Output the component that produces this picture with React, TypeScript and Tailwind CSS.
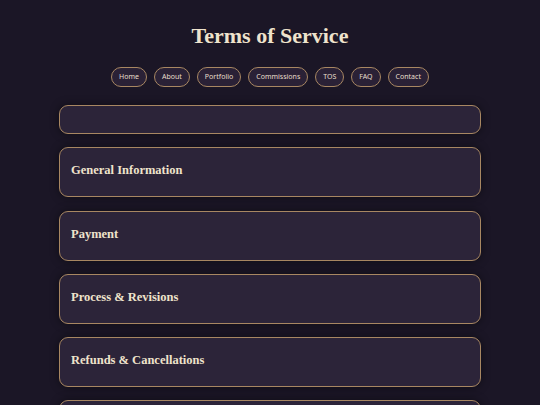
import React from "react";

const links = ["Home", "About", "Portfolio", "Commissions", "TOS", "FAQ", "Contact"];

// the first and last boxes are intro/continuation panels with no heading
const sections = [
  "",
  "General Information",
  "Payment",
  "Process & Revisions",
  "Refunds & Cancellations",
  "",
];

const NavPill: React.FC<{ label: string }> = ({ label }) => (
  <a
    href="#"
    className="h-[20px] px-[7px] flex items-center rounded-full border border-[#a88762] bg-[#2a2136] text-[7px] text-[#e9dfcd] font-['Noto_Sans',sans-serif]"
  >
    {label}
  </a>
);

const Section: React.FC<{ title: string; first?: boolean }> = ({ title, first }) =>
  first ? (
    <div className="h-[29px] rounded-[9px] border border-[#a88762] bg-[#2c2439] shadow-[0_0_10px_rgba(0,0,0,0.45)]" />
  ) : (
    <div className="h-[50px] shrink-0 rounded-[9px] border border-[#a88762] bg-[#2c2439] shadow-[0_0_10px_rgba(0,0,0,0.45)] px-[11px] pt-[13px]">
      {title && (
        <h2 className="text-[12.5px] font-bold text-[#efe3cc] font-['Liberation_Serif',serif]">
          {title}
        </h2>
      )}
    </div>
  );

export default function App() {
  return (
    <div className="w-[540px] h-[405px] overflow-hidden bg-[#1b1626] flex flex-col items-center">
      <h1 className="mt-[20px] text-[22px] leading-[32px] font-bold text-[#efe3cc] font-['Liberation_Serif',serif]">
        Terms of Service
      </h1>
      <nav className="mt-[15px] flex gap-[7px]">
        {links.map((l) => (
          <NavPill key={l} label={l} />
        ))}
      </nav>
      <div className="mt-[18px] w-[422px] flex flex-col gap-[13.25px]">
        {sections.map((s, i) => (
          <Section key={i} title={s} first={i === 0} />
        ))}
      </div>
    </div>
  );
}
